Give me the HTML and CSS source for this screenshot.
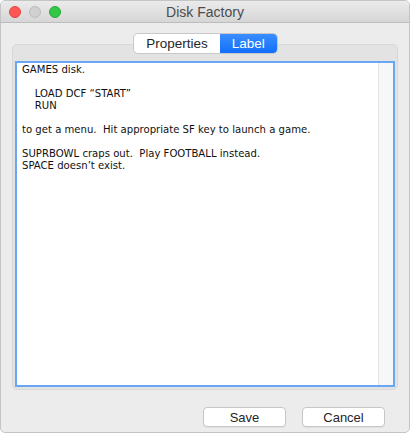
FILE: index.html
```html
<!DOCTYPE html>
<html lang="en">
<head>
  <meta charset="UTF-8">
  <title>Disk Factory</title>
  <link rel="stylesheet" href="styles.css">
</head>
<body>

  <div class="window">
    <div class="titlebar">
      <div class="lights">
        <span class="light red"></span>
        <span class="light gray"></span>
        <span class="light green"></span>
      </div>
      <div class="title">Disk Factory</div>
      <div></div>
    </div>

    <div class="content">
      <div class="segments">
        <span class="segment">Properties</span>
        <span class="segment selected">Label</span>
      </div>

      <div class="tabbox">
        <div class="editor">
<pre class="label-text">GAMES disk.

    LOAD DCF “START”
    RUN

to get a menu.  Hit appropriate SF key to launch a game.

SUPRBOWL craps out.  Play FOOTBALL instead.
SPACE doesn’t exist.</pre>
          <div class="scrolltrack"></div>
        </div>
      </div>

      <div class="buttons">
        <button class="btn">Save</button>
        <button class="btn">Cancel</button>
      </div>
    </div>
  </div>

</body>
</html>
```

FILE: styles.css
```css
body {
  margin: 0;
  padding: 0;
  font-family: 'DejaVu Sans', sans-serif;
  background-color: #ffffff;
}
.window {
  width: 410px;
  height: 433px;
  box-sizing: border-box;
  border: 1px solid #c4c4c4;
  border-radius: 5px;
  background-color: #ececec;
  overflow: hidden;
  display: flex;
  flex-direction: column;
}
.titlebar {
  height: 21px;
  flex-shrink: 0;
  display: grid;
  grid-template-columns: 1fr auto 1fr;
  align-items: center;
  background: linear-gradient(#ebebeb, #d6d6d6);
  border-bottom: 1px solid #bdbdbd;
}
.lights {
  display: flex;
  gap: 8px;
  padding-left: 8px;
}
.light {
  width: 12px;
  height: 12px;
  border-radius: 50%;
  box-sizing: border-box;
}
.red {
  background-color: #fc5753;
  border: 1px solid #de4643;
}
.gray {
  background-color: #d0d0d0;
  border: 1px solid #bcbcbc;
}
.green {
  background-color: #33c748;
  border: 1px solid #27aa35;
}
.title {
  font-family: 'Liberation Sans', sans-serif;
  font-size: 14px;
  color: #4c4c4c;
}
.content {
  flex: 1;
  display: flex;
  flex-direction: column;
  padding: 10px 11px 0 11px;
}
.segments {
  align-self: center;
  display: flex;
  margin-bottom: -10px;
  position: relative;
  z-index: 1;
  margin-left: 1px;
  border: 1px solid #c8c8c8;
  border-radius: 5px;
  overflow: hidden;
  background-color: #ffffff;
}
.segment {
  font-family: 'Liberation Sans', sans-serif;
  font-size: 13.5px;
  color: #262626;
  height: 19px;
  line-height: 19px;
  padding: 0 12px 0 12px;
}
.segment.selected {
  background: linear-gradient(#3a8dfd, #1170fb);
  color: #ffffff;
}
.tabbox {
  height: 346px;
  box-sizing: border-box;
  background-color: #e3e3e3;
  border: 1px solid #d8d8d8;
  border-radius: 5px;
  padding: 16px 2px 0 2px;
}
.editor {
  height: 326px;
  box-sizing: border-box;
  border: 2px solid #6ba6f4;
  background-color: #ffffff;
  display: flex;
}
.label-text {
  flex: 1;
  margin: 0;
  padding: 1px 5px;
  font-family: 'DejaVu Sans', sans-serif;
  font-size: 10.1px;
  line-height: 12px;
  color: #111111;
}
.scrolltrack {
  width: 14px;
  background-color: #f7f7f7;
  border-left: 1px solid #e4e4e4;
}
.buttons {
  display: flex;
  justify-content: flex-end;
  gap: 16px;
  padding: 17px 13px 0 0;
}
.btn {
  font-family: 'Liberation Sans', sans-serif;
  font-size: 13px;
  color: #262626;
  background-color: #ffffff;
  border: 1px solid #c6c6c6;
  border-radius: 4px;
  width: 83px;
  height: 20px;
  padding: 0;
  box-shadow: 0 1px 0 rgba(0,0,0,0.05);
}
```
